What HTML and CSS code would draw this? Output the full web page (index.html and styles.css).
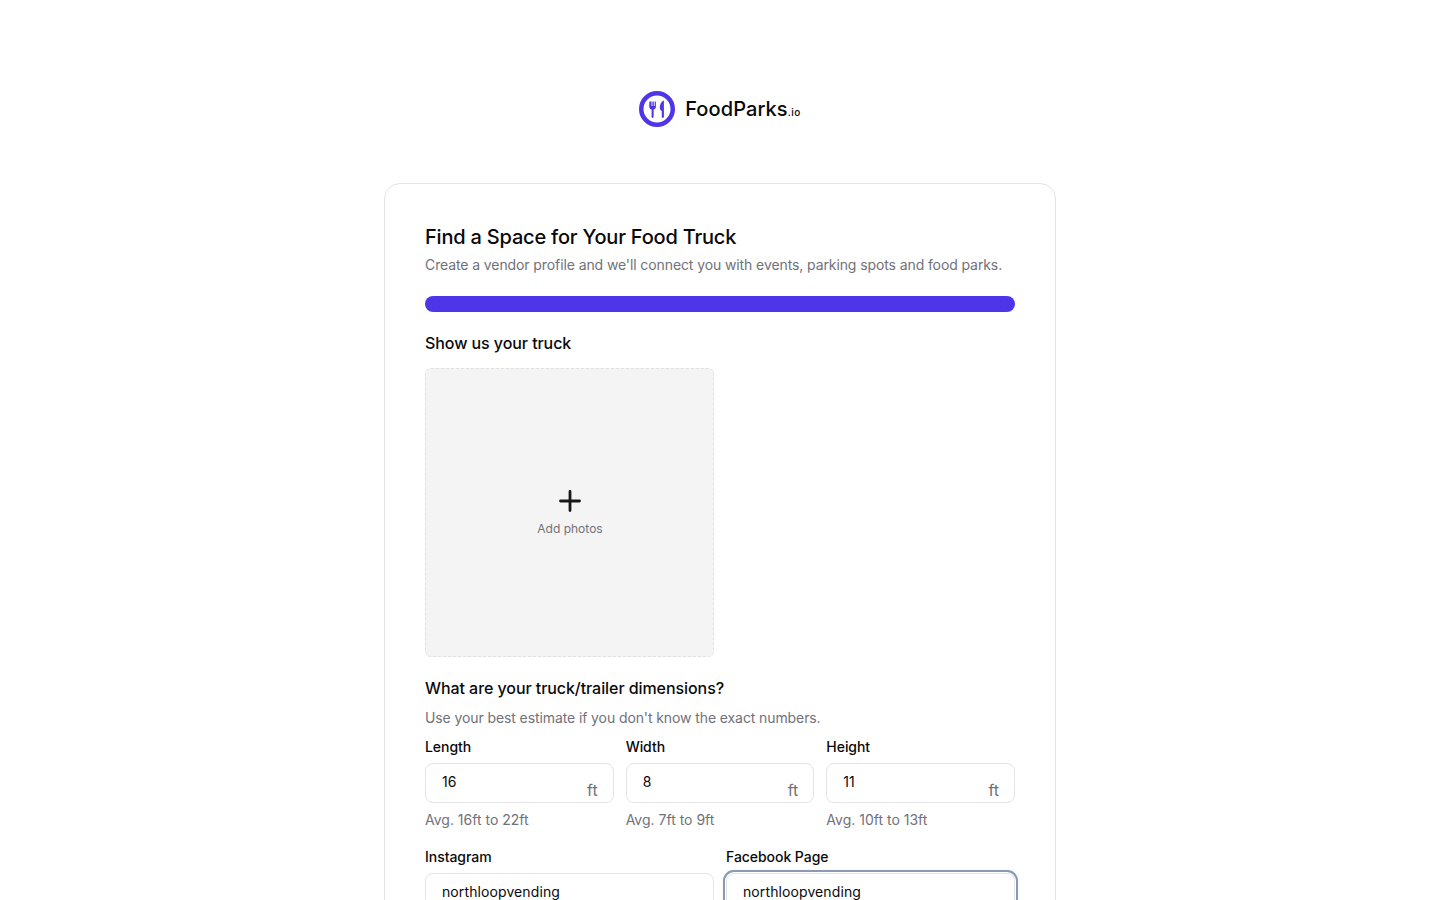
FILE: index.html
```html
<!DOCTYPE html>
<html lang="en">
<head>
  <meta charset="UTF-8" />
  <meta name="viewport" content="width=device-width, initial-scale=1" />
  <title>FoodParks.io</title>
  <link rel="stylesheet" href="styles.css">
</head>
<body>

<header class="brand">
  <svg class="brand-icon" width="36" height="36" viewBox="0 0 36 36" aria-hidden="true">
    <circle cx="18" cy="18" r="15.75" fill="none" stroke="#4f35e8" stroke-width="4.5"/>
    <path d="M10.300 10.500v5.200c0 1.600 1 2.600 2.300 2.900v7.200c0 .7.4 1.200 1 1.200s1-.5 1-1.200v-7.200c1.300-.3 2.300-1.300 2.300-2.900v-5.200h-1.200v4.600h-.9v-4.600h-1.400v4.600h-.9v-4.600z" fill="#4f35e8"/>
    <path d="M24.700 9.500c-2.300.8-3.900 3.700-3.900 7 0 1.900.8 3.100 2 3.600v5.700c0 .7.4 1.200 1.050 1.200s1.050-.5 1.050-1.200V10.200c0-.5-.1-.8-.2-.7z" fill="#4f35e8"/>
  </svg>
  <span class="brand-name">FoodParks<small>.io</small></span>
</header>

<main class="card">
  <h1 class="title">Find a Space for Your Food Truck</h1>
  <p class="subtitle">Create a vendor profile and we'll connect you with events, parking spots and food parks.</p>

  <div class="progress"></div>

  <h2 class="section-title">Show us your truck</h2>
  <div class="photo-grid">
    <button class="photo-add" type="button">
      <svg width="24" height="24" viewBox="0 0 24 24" aria-hidden="true">
        <path d="M12 2.500v19M2.500 12h19" fill="none" stroke="#18181b" stroke-width="2.800" stroke-linecap="round"/>
      </svg>
      <span>Add photos</span>
    </button>
  </div>

  <h2 class="section-title dims-title">What are your truck/trailer dimensions?</h2>
  <p class="hint">Use your best estimate if you don't know the exact numbers.</p>

  <div class="dims">
    <div class="field">
      <label class="label">Length</label>
      <div class="input-wrap">
        <input class="input" type="text" value="16">
        <span class="unit">ft</span>
      </div>
      <p class="note">Avg. 16ft to 22ft</p>
    </div>
    <div class="field">
      <label class="label">Width</label>
      <div class="input-wrap">
        <input class="input" type="text" value="8">
        <span class="unit">ft</span>
      </div>
      <p class="note">Avg. 7ft to 9ft</p>
    </div>
    <div class="field">
      <label class="label">Height</label>
      <div class="input-wrap">
        <input class="input" type="text" value="11">
        <span class="unit">ft</span>
      </div>
      <p class="note">Avg. 10ft to 13ft</p>
    </div>
  </div>

  <div class="socials">
    <div class="field">
      <label class="label">Instagram</label>
      <input class="input input-text" type="text" value="northloopvending">
    </div>
    <div class="field">
      <label class="label">Facebook Page</label>
      <input class="input input-text input-focus" type="text" value="northloopvending">
    </div>
  </div>
</main>

</body>
</html>
```

FILE: styles.css
```css
* {
  box-sizing: border-box;
}
body {
  margin: 0;
  background-color: #fff;
  color: #09090b;
  font-family: Inter, "Liberation Sans", sans-serif;
}
h1, h2, p {
  margin: 0;
}
.brand {
  display: flex;
  justify-content: center;
  align-items: flex-start;
  gap: 10px;
  padding-top: 91px;
  height: 183px;
}
.brand-name {
  font-size: 20px;
  font-weight: 500;
  line-height: 36px;
  letter-spacing: 0.1px;
}
.brand-name small {
  font-size: 10px;
  font-weight: 500;
  letter-spacing: 0.5px;
}
.card {
  width: 672px;
  margin: 0 auto 40px;
  padding: 40px;
  border: 1px solid #e4e4e7;
  border-radius: 16px;
}
.title {
  font-size: 20px;
  font-weight: 500;
  line-height: 28px;
  letter-spacing: -0.2px;
  margin-top: -1px;
}
.subtitle {
  font-size: 14px;
  line-height: 20px;
  letter-spacing: -0.1px;
  color: #71717a;
  margin-top: 4px;
}
.progress {
  height: 16px;
  margin-top: 21px;
  border-radius: 8px;
  background-color: #4f35e8;
}
.section-title {
  font-size: 16px;
  font-weight: 500;
  line-height: 24px;
  letter-spacing: -0.07px;
  margin-top: 19px;
}
.photo-grid {
  display: grid;
  grid-template-columns: 1fr 1fr;
  gap: 12px;
  margin-top: 13px;
}
.photo-add {
  display: flex;
  flex-direction: column;
  align-items: center;
  justify-content: center;
  gap: 8px;
  height: 289px;
  padding: 0 0 0 1px;
  border: 1px dashed #e0e0e0;
  border-radius: 6px;
  background-color: #f4f4f4;
  font: inherit;
}
.photo-add span {
  font-size: 12px;
  line-height: 16px;
  color: #71717a;
}
.dims-title {
  margin-top: 19px;
}
.hint {
  font-size: 14px;
  line-height: 20px;
  letter-spacing: -0.1px;
  color: #71717a;
  margin-top: 8px;
}
.dims {
  display: grid;
  grid-template-columns: repeat(3, 1fr);
  gap: 12px;
  margin-top: 9px;
}
.socials {
  display: grid;
  grid-template-columns: 1fr 1fr;
  gap: 12px;
  margin-top: 17px;
}
.label {
  display: block;
  font-size: 14px;
  font-weight: 500;
  line-height: 20px;
  letter-spacing: -0.05px;
  margin-bottom: 6px;
}
.input-wrap {
  position: relative;
}
.input {
  display: block;
  width: 100%;
  height: 40px;
  padding: 0 16px 4px;
  border: 1px solid #e4e4e7;
  border-radius: 8px;
  background: #fff;
  color: #09090b;
  font: 400 14px Inter, "Liberation Sans", sans-serif;
}
.input-text {
  letter-spacing: 0.1px;
}
.input-focus {
  outline: none;
  box-shadow: 0 0 0 1px #fff, 0 0 0 3px #8b9ab0, 0 0 1px 3px rgba(139, 154, 176, 0.5);
}
.unit {
  position: absolute;
  right: 16px;
  bottom: 3px;
  font-size: 16px;
  line-height: 20px;
  color: #71717a;
}
.note {
  font-size: 14px;
  line-height: 20px;
  color: #71717a;
  margin-top: 7px;
}
```
